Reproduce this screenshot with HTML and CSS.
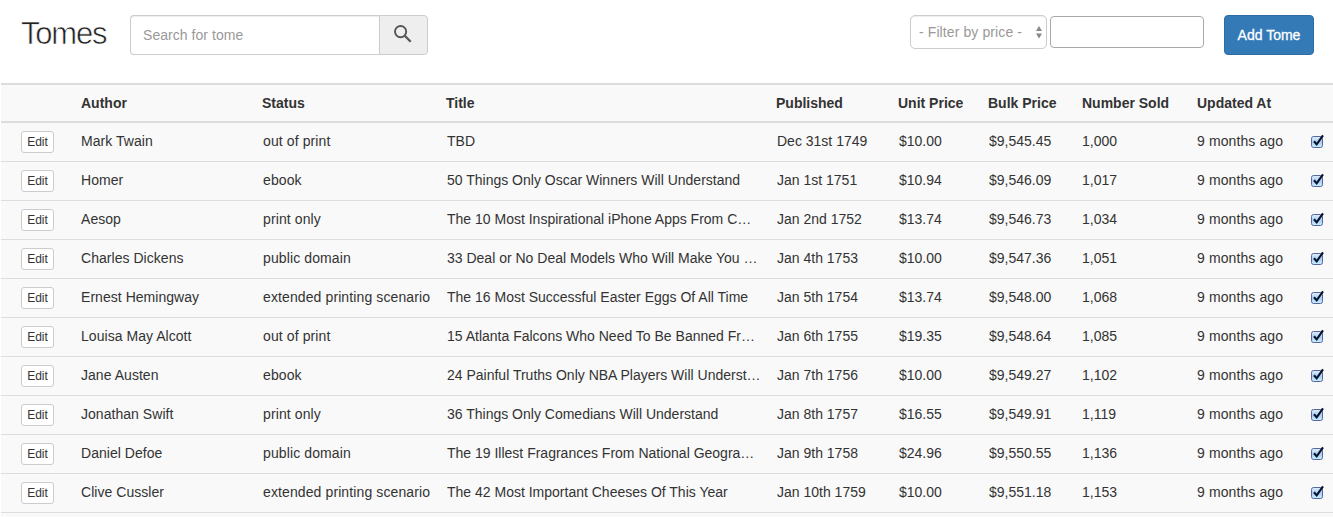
FILE: index.html
```html
<!DOCTYPE html>
<html lang="en">
<head>
<meta charset="utf-8">
<title>Tomes</title>
<link rel="stylesheet" href="styles.css">
</head>
<body>
<header class="toolbar">
  <h1 class="heading">Tomes</h1>
  <div class="search">
    <input class="search-input" type="text" placeholder="Search for tome">
    <button class="search-button" aria-label="Search"><svg width="18" height="18" viewBox="0 0 18 18" fill="none" stroke="#555"><circle cx="6.6" cy="6.6" r="5.6" stroke-width="1.9"/><path d="M10.8 10.8L16.7 16.7" stroke-width="2.3"/></svg></button>
  </div>
  <div class="filters">
    <div class="select"><span class="select-label">- Filter by price -</span><svg class="select-arrows" width="6" height="13" viewBox="0 0 6 13" fill="#888"><path d="M0 5L3 0L6 5ZM0 7.5H6L3 12.5Z"/></svg></div>
    <input class="filter-input" type="text" aria-label="Price">
  </div>
  <button class="add">Add Tome</button>
</header>
<table class="tomes">
  <colgroup><col class="c-edit"><col class="c-author"><col class="c-status"><col class="c-title"><col class="c-published"><col class="c-unit"><col class="c-bulk"><col class="c-sold"><col class="c-updated"><col class="c-check"></colgroup>
  <thead><tr><th></th><th class="shift">Author</th><th>Status</th><th>Title</th><th>Published</th><th>Unit Price</th><th>Bulk Price</th><th>Number Sold</th><th class="shift">Updated At</th><th></th></tr></thead>
  <tbody id="rows"></tbody>
</table>
<template id="check"><svg class="check" width="14" height="15" viewBox="0 0 14 15"><defs><linearGradient id="g" x2="0" y2="1"><stop offset="0" stop-color="#e4effb"/><stop offset=".5" stop-color="#a9cdf3"/><stop offset="1" stop-color="#c9efff"/></linearGradient></defs><rect x=".5" y="2.5" width="11" height="11" rx="2" fill="url(#g)" stroke="#56679f"/><path d="M3 7.2L5.7 10.4L12 1.4" fill="none" stroke="#07122b" stroke-width="2.1"/></svg></template>
<script src="tomes.js"></script>
</body>
</html>
```
FILE: styles.css
```css
* { box-sizing: border-box; }
body {
  margin: 0;
  background: #fff;
  color: #333;
  font: 14px/20px "Liberation Sans", Arial, sans-serif;
}
input, button { font: inherit; }
.toolbar {
  display: flex;
  align-items: flex-start;
  height: 83px;
  padding: 15px 19px 0 21px;
}
.heading {
  width: 109px;
  margin: 2px 0 0;
  font: 400 31px/34px "Liberation Sans", Arial, sans-serif;
  letter-spacing: -1.2px;
  color: #222;
  -webkit-text-stroke: .6px #fff;
}
.search { display: flex; width: 298px; height: 40px; }
.search-input {
  width: 249px;
  padding: 0 12px;
  border: 1px solid #ccc;
  border-right: 0;
  border-radius: 4px 0 0 4px;
  box-shadow: inset 0 1px 1px rgba(0, 0, 0, .075);
}
.search-input::placeholder { color: #999; opacity: 1; letter-spacing: .05px; }
.search-button {
  display: flex;
  flex: 1;
  padding: 9px 0 0 14px;
  border: 1px solid #ccc;
  border-radius: 0 4px 4px 0;
  background: #eee;
}
.filters { display: flex; gap: 3px; margin-left: auto; }
.select {
  display: flex;
  justify-content: space-between;
  width: 137px;
  height: 34px;
  padding: 7px 4px 0 8px;
  border: 1px solid #ccc;
  border-radius: 5px;
  box-shadow: inset 0 1px 1px rgba(0, 0, 0, .075);
  color: #999;
  line-height: 19px;
  letter-spacing: .1px;
  white-space: nowrap;
}
.select-arrows { margin-top: 3px; }
.filter-input {
  width: 154px;
  height: 32px;
  margin-top: 1px;
  border: 1px solid #aaa;
  border-radius: 4px;
}
.add {
  width: 90px;
  height: 40px;
  margin-left: 20px;
  padding: 0;
  border: 1px solid #2e6da4;
  border-radius: 4px;
  background: #337ab7;
  color: #fff;
  -webkit-text-stroke: .3px #fff;
}
.tomes {
  width: 1332px;
  margin-left: 1px;
  table-layout: fixed;
  border-spacing: 0;
  background: #f9f9f9;
}
.c-edit { width: 71px; }
.c-author { width: 182px; }
.c-status { width: 184px; }
.c-title { width: 330px; }
.c-published { width: 122px; }
.c-unit { width: 90px; }
.c-bulk { width: 94px; }
.c-sold { width: 114px; }
.c-updated { width: 115px; }
.c-check { width: 30px; }
th { padding: 0 0 0 8px; text-align: left; white-space: nowrap; }
th.shift { padding-left: 9px; }
th {
  height: 40px;
  border-top: 2px solid #ddd;
  border-bottom: 2px solid #ddd;
}
td {
  height: 39px;
  padding: 0 0 2px 9px;
  border-bottom: 1px solid #ddd;
  white-space: nowrap;
}
td:nth-child(2) { letter-spacing: .04px; }
td:nth-child(3) { letter-spacing: .11px; }
td:nth-child(8) { padding-left: 8px; }
td:nth-child(9) { letter-spacing: .1px; }
td:first-child { padding-left: 20px; }
td:last-child { padding-left: 8px; }
.spacer td { height: 4px; padding: 0; border: 0; }
.edit {
  display: block;
  width: 33px;
  height: 22px;
  margin-top: 1px;
  padding: 0;
  border: 1px solid #ccc;
  border-radius: 3px;
  background: #fff;
  color: #333;
  font-size: 12px;
  line-height: 18px;
}
.check { display: block; }
```
FILE: tomes.js
```js
const rows = [
  ["Mark Twain", "out of print", "TBD", "Dec 31st 1749", "$10.00", "$9,545.45", "1,000"],
  ["Homer", "ebook", "50 Things Only Oscar Winners Will Understand", "Jan 1st 1751", "$10.94", "$9,546.09", "1,017"],
  ["Aesop", "print only", "The 10 Most Inspirational iPhone Apps From C…", "Jan 2nd 1752", "$13.74", "$9,546.73", "1,034"],
  ["Charles Dickens", "public domain", "33 Deal or No Deal Models Who Will Make You …", "Jan 4th 1753", "$10.00", "$9,547.36", "1,051"],
  ["Ernest Hemingway", "extended printing scenario", "The 16 Most Successful Easter Eggs Of All Time", "Jan 5th 1754", "$13.74", "$9,548.00", "1,068"],
  ["Louisa May Alcott", "out of print", "15 Atlanta Falcons Who Need To Be Banned Fr…", "Jan 6th 1755", "$19.35", "$9,548.64", "1,085"],
  ["Jane Austen", "ebook", "24 Painful Truths Only NBA Players Will Underst…", "Jan 7th 1756", "$10.00", "$9,549.27", "1,102"],
  ["Jonathan Swift", "print only", "36 Things Only Comedians Will Understand", "Jan 8th 1757", "$16.55", "$9,549.91", "1,119"],
  ["Daniel Defoe", "public domain", "The 19 Illest Fragrances From National Geogra…", "Jan 9th 1758", "$24.96", "$9,550.55", "1,136"],
  ["Clive Cussler", "extended printing scenario", "The 42 Most Important Cheeses Of This Year", "Jan 10th 1759", "$10.00", "$9,551.18", "1,153"]
];
const check = document.getElementById("check").innerHTML;
document.getElementById("rows").innerHTML = rows.map(r =>
  `<tr><td><button class="edit">Edit</button></td>` +
  r.map(v => `<td>${v}</td>`).join("") +
  `<td>9 months ago</td><td>${check}</td></tr>`
).join("") + '<tr class="spacer"><td colspan="10"></td></tr>';
```
